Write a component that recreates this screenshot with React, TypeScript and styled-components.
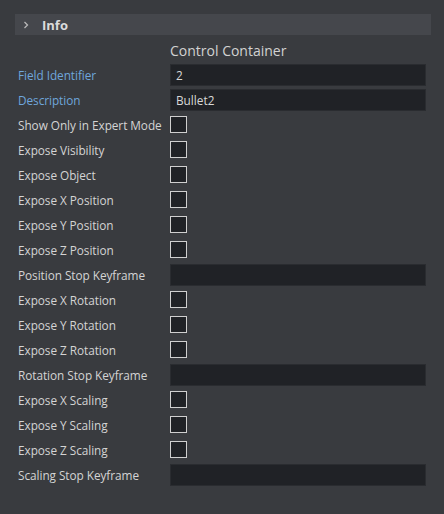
import React from 'react'
import styled, { createGlobalStyle } from 'styled-components'

const Global = createGlobalStyle`
  html, body {
    margin: 0;
    padding: 0;
    background: #393b3f;
  }
  body {
    font-family: "Open Sans", "DejaVu Sans", sans-serif;
    color: #d6d6d6;
  }
`

const Panel = styled.div`
  width: 444px;
  height: 514px;
  box-sizing: border-box;
  padding: 14px 13px 0 15px;
  background: #393b3f;
`

const Header = styled.div`
  height: 21px;
  background: #45474c;
  display: flex;
  align-items: center;
  padding-left: 7px;
  gap: 12px;
  font-size: 13px;
  font-weight: 700;
  color: #dcdcdc;
`

const Chevron = styled.svg`
  width: 8px;
  height: 8px;
`

const Title = styled.div`
  margin: 5px 0 0 155px;
  height: 22px;
  font-size: 14px;
  color: #d2d2d2;
  line-height: 22px;
`

const Form = styled.div`
  display: flex;
  flex-direction: column;
  padding: 0 5px 0 3px;
`

const Row = styled.div`
  height: 25px;
  display: grid;
  grid-template-columns: 152px 1fr;
  align-items: center;
`

const Label = styled.span<{ $accent?: boolean }>`
  font-size: 11.8px;
  letter-spacing: -0.05px;
  color: ${p => (p.$accent ? '#6fa6dc' : '#d4d4d4')};
  white-space: nowrap;
`

const Field = styled.div`
  height: 22px;
  box-sizing: border-box;
  background: #202226;
  border: 1px solid #2a2c30;
  font-size: 11.8px;
  color: #d8d8d8;
  display: flex;
  align-items: center;
  padding-left: 5px;
`

const Check = styled.div`
  width: 17px;
  height: 17px;
  box-sizing: border-box;
  border: 1px solid #cfcfcf;
  background: #202226;
`

type Item = { label: string; kind: 'text' | 'check'; value?: string; accent?: boolean }

const items: Item[] = [
  { label: 'Field Identifier', kind: 'text', value: '2', accent: true },
  { label: 'Description', kind: 'text', value: 'Bullet2', accent: true },
  { label: 'Show Only in Expert Mode', kind: 'check' },
  { label: 'Expose Visibility', kind: 'check' },
  { label: 'Expose Object', kind: 'check' },
  { label: 'Expose X Position', kind: 'check' },
  { label: 'Expose Y Position', kind: 'check' },
  { label: 'Expose Z Position', kind: 'check' },
  { label: 'Position Stop Keyframe', kind: 'text', value: '' },
  { label: 'Expose X Rotation', kind: 'check' },
  { label: 'Expose Y Rotation', kind: 'check' },
  { label: 'Expose Z Rotation', kind: 'check' },
  { label: 'Rotation Stop Keyframe', kind: 'text', value: '' },
  { label: 'Expose X Scaling', kind: 'check' },
  { label: 'Expose Y Scaling', kind: 'check' },
  { label: 'Expose Z Scaling', kind: 'check' },
  { label: 'Scaling Stop Keyframe', kind: 'text', value: '' },
]

export default function App() {
  return (
    <Panel>
      <Global />
      <Header>
        <Chevron viewBox="0 0 8 8">
          <path d="M2.5 1 L5.5 4 L2.5 7" fill="none" stroke="#b8b8b8" strokeWidth="1.3" />
        </Chevron>
        Info
      </Header>
      <Title>Control Container</Title>
      <Form>
        {items.map(it => (
          <Row key={it.label}>
            <Label $accent={it.accent}>{it.label}</Label>
            {it.kind === 'text' ? <Field>{it.value}</Field> : <Check />}
          </Row>
        ))}
      </Form>
    </Panel>
  )
}
